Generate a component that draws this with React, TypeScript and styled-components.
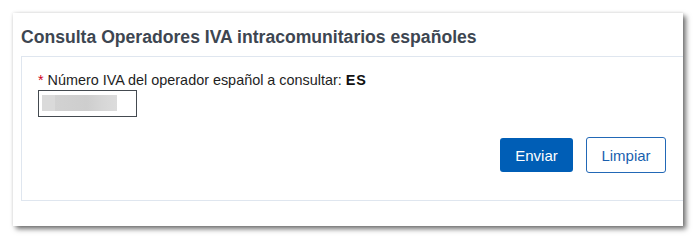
import React from 'react';
import styled, { createGlobalStyle } from 'styled-components';

const GlobalStyle = createGlobalStyle`
  html, body {
    margin: 0;
    padding: 0;
    background: #ffffff;
  }
  body {
    font-family: "Liberation Sans", Arial, sans-serif;
  }
`;

const Page = styled.div`
  padding: 13px 14px 0 13px;
  height: 240px;
  box-sizing: border-box;
`;

const Card = styled.div`
  width: 670px;
  height: 213px;
  background: #ffffff;
  overflow: hidden;
  box-shadow: 3px 3px 5px rgba(0, 0, 0, 0.55), 0 0 3px rgba(0, 0, 0, 0.12);
`;

const Title = styled.h2`
  margin: 0;
  height: 43px;
  padding: 5px 0 0 8px;
  display: flex;
  align-items: center;
  font-size: 17.6px;
  font-weight: bold;
  color: #3d4651;
  box-sizing: border-box;
`;

const Panel = styled.form`
  margin: 0 0 0 8px;
  height: 145px;
  box-sizing: border-box;
  border: 1px solid #dfe6ef;
  border-right: none;
  padding: 14px 17px 0 16px;
  display: flex;
  flex-direction: column;
`;

const Label = styled.label`
  display: block;
  font-size: 14.4px;
  line-height: 19px;
  color: #1e1e1e;
`;

const Required = styled.span`
  color: #d0021b;
`;

const Prefix = styled.b`
  letter-spacing: 1px;
  color: #111;
`;

const VatInput = styled.input`
  display: block;
  width: 99px;
  height: 27px;
  box-sizing: border-box;
  margin: 0;
  border: 1px solid #444a50;
  border-radius: 0;
  background:
    linear-gradient(to right, #dadada 0, #dadada 13px, #d2d2d2 13px, #cecece 45px, #d6d6d6 60px, #dcdcdc 75px)
    no-repeat 3px 4px / 75px 16px,
    #ffffff;
  outline: none;
`;

const Actions = styled.div`
  display: flex;
  justify-content: flex-end;
  align-items: center;
  gap: 13px;
  margin-top: 20px;
`;

const Button = styled.button<{ $primary?: boolean }>`
  font-family: "Liberation Sans", Arial, sans-serif;
  font-size: 15px;
  box-sizing: border-box;
  border-radius: 3px;
  cursor: pointer;
  padding: 0;
  height: ${(p) => (p.$primary ? '34px' : '36px')};
  width: ${(p) => (p.$primary ? '73px' : '80px')};
  background: ${(p) => (p.$primary ? '#005eb6' : '#ffffff')};
  color: ${(p) => (p.$primary ? '#ffffff' : '#1a5fae')};
  border: ${(p) => (p.$primary ? 'none' : '1px solid #2268b6')};
`;

const App: React.FC = () => {
  return (
    <>
      <GlobalStyle />
      <Page>
        <Card>
          <Title>Consulta Operadores IVA intracomunitarios españoles</Title>
          <Panel onSubmit={(e) => e.preventDefault()}>
            <Label htmlFor="nif">
              <Required>*</Required> Número IVA del operador español a consultar: <Prefix>ES</Prefix>
            </Label>
            <VatInput id="nif" type="text" />
            <Actions>
              <Button $primary type="submit">Enviar</Button>
              <Button type="reset">Limpiar</Button>
            </Actions>
          </Panel>
        </Card>
      </Page>
    </>
  );
};

export default App;
